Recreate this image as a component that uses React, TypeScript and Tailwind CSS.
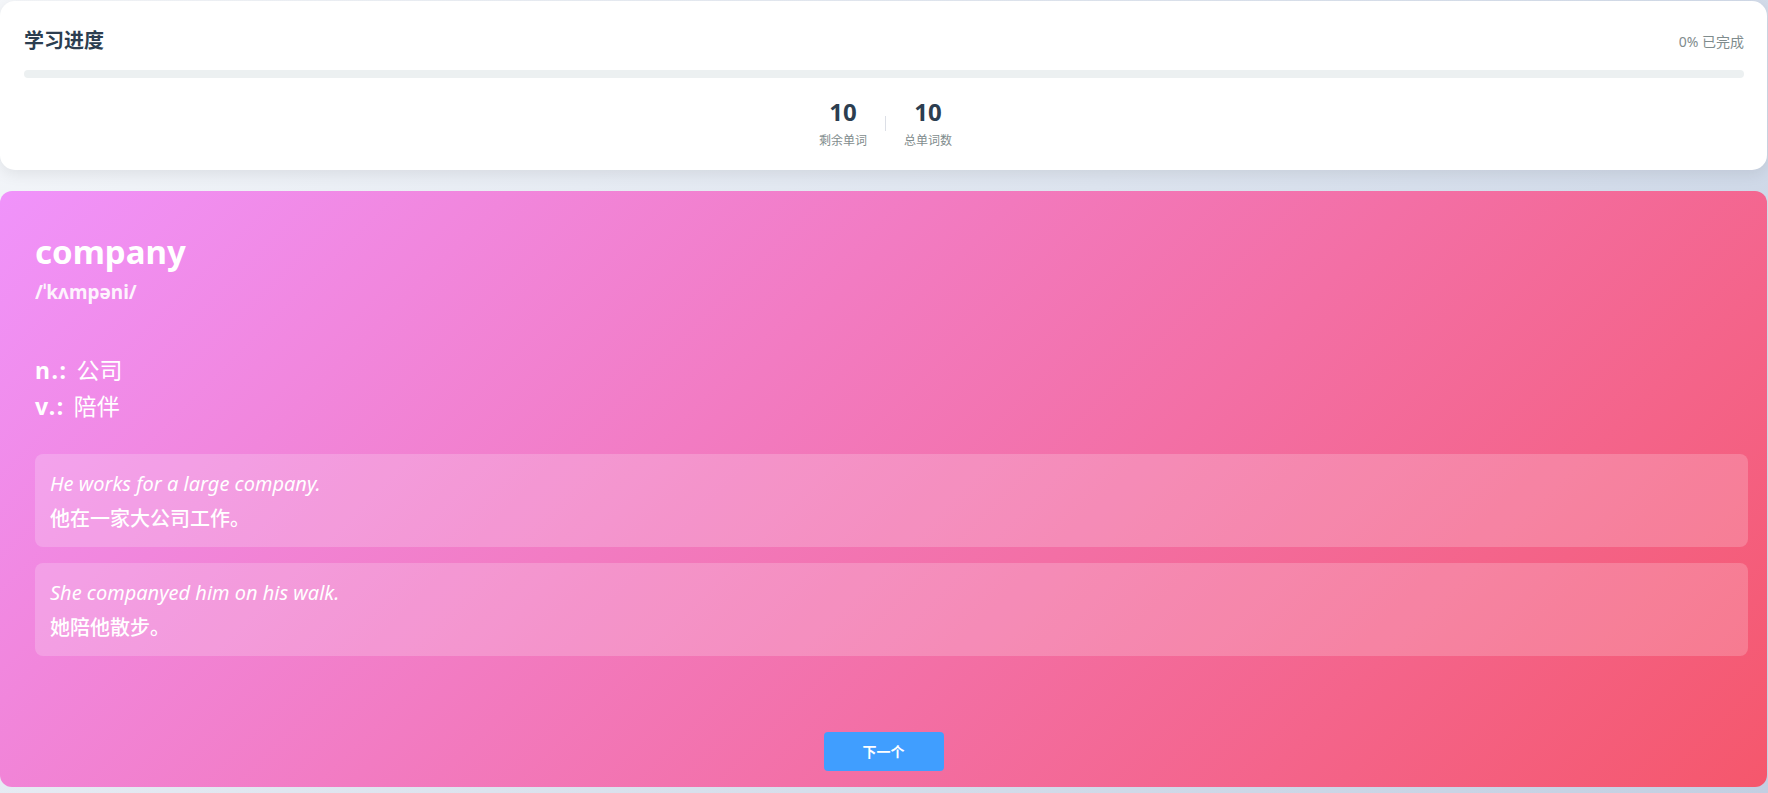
function Stat({ n, label }: { n: string; label: string }) {
  return (
    <div className="flex flex-col items-center">
      <div className="text-[24px] font-bold leading-8 text-[#2c3e50]">{n}</div>
      <div className="mt-[4px] text-[12px] leading-[18px] text-[#7f8c8d]">{label}</div>
    </div>
  );
}

function Example({ en, zh }: { en: string; zh: string }) {
  return (
    <div className="rounded-[8px] bg-white/20 px-[15px] pt-[15px] pb-[14px]">
      <div className="text-[20px] italic leading-[29px] text-white">{en}</div>
      <div className="mt-[6px] text-[20px] font-medium leading-[29px] text-white">{zh}</div>
    </div>
  );
}

export default function App() {
  return (
    <div className="min-h-screen bg-[linear-gradient(135deg,#f5f7fa_0%,#c3cfe2_100%)] pt-px font-['Noto_Sans','Noto_Sans_CJK_SC',sans-serif]">
      <div className="mr-px rounded-[15px] bg-white pl-[24px] pr-[23px] pt-[21px] pb-[20px] shadow-[0_4px_15px_rgba(0,0,0,0.08)]">
        <div className="flex h-[38px] items-center justify-between">
          <h2 className="text-[20px] font-bold text-[#2c3e50]">学习进度</h2>
          <span className="text-[14px] text-[#7f8c8d]">0% 已完成</span>
        </div>
        <div className="mt-[10px] h-2 rounded-full bg-[#ecf0f1]">
          <div className="h-full w-0 rounded-full bg-[#42b983]" />
        </div>
        <div className="mt-[18px] flex items-center justify-center gap-[18px] pl-[3px]">
          <Stat n="10" label="剩余单词" />
          <div className="h-[15px] w-px bg-[#dcdfe6]" />
          <Stat n="10" label="总单词数" />
        </div>
      </div>

      <div className="mt-[21px] mr-px flex h-[596px] flex-col rounded-[12px] bg-[linear-gradient(135deg,#f093fb_0%,#f5576c_100%)] pt-[41px] pl-[35px] pr-[19px] text-white">
        <div className="text-[33px] font-bold leading-[1.2]">company</div>
        <div className="mt-[7px] text-[19px] font-bold leading-[27px] opacity-90">/ˈkʌmpəni/</div>

        <div className="mt-[46px] text-[23px] leading-[36px]">
          <div>
            <span className="mr-[9px] font-bold tracking-[1.5px]">n.:</span>
            <span>公司</span>
          </div>
          <div>
            <span className="mr-[9px] font-bold tracking-[1.5px]">v.:</span>
            <span>陪伴</span>
          </div>
        </div>

        <div className="mt-[30px] flex flex-col gap-4">
          <Example en="He works for a large company." zh="他在一家大公司工作。" />
          <Example en="She companyed him on his walk." zh="她陪他散步。" />
        </div>

        <div className="mt-auto mb-[16px] flex justify-center pr-[16px]">
          <button className="h-[39px] w-[120px] rounded-[4px] bg-[#409eff] text-[14px] font-semibold text-white">
            下一个
          </button>
        </div>
      </div>
    </div>
  );
}
